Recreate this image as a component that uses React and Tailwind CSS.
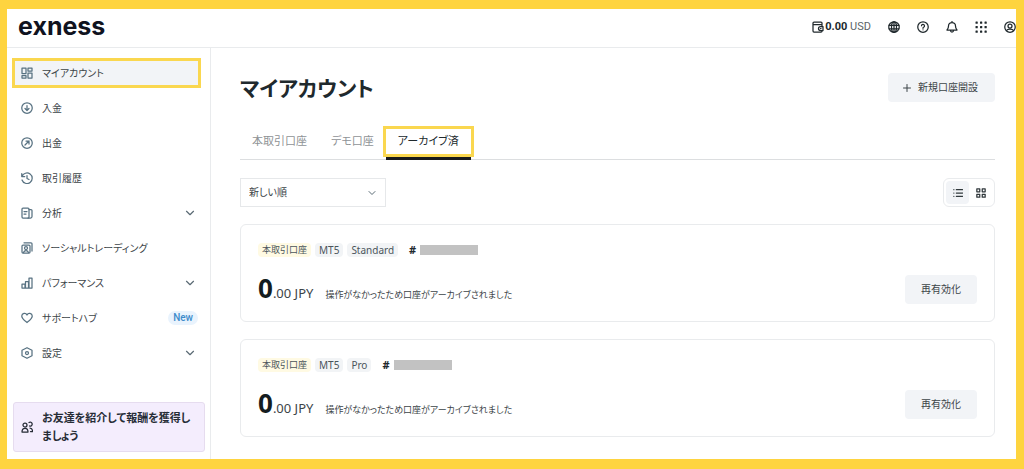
import clsx from 'clsx'
import { ChevronDown, Plus } from 'lucide-react'

function Icon({ size = 'size-3', width = 2.5, children }) {
  return (
    <svg
      viewBox="0 0 24 24"
      className={clsx(size, 'shrink-0')}
      fill="none"
      stroke="currentColor"
      strokeWidth={width}
      strokeLinecap="round"
      strokeLinejoin="round"
      aria-hidden="true"
    >
      {children}
    </svg>
  )
}

const icons = {
  accounts: (
    <Icon>
      <rect x="2" y="2" width="8" height="11" />
      <rect x="14" y="2" width="8" height="6" />
      <rect x="2" y="17" width="8" height="5" />
      <rect x="14" y="12" width="8" height="10" />
    </Icon>
  ),
  deposit: (
    <Icon>
      <circle cx="12" cy="12" r="10.500" />
      <path d="M12 7v10M8 13l4 4 4-4" />
    </Icon>
  ),
  withdraw: (
    <Icon>
      <circle cx="12" cy="12" r="10.500" />
      <path d="M8 16l8-8M10 8h6v6" />
    </Icon>
  ),
  history: (
    <Icon>
      <path d="M1.500 3v6h6M2 9a10.500 10.500 0 1 1 0 7M12 7v6l4 2" />
    </Icon>
  ),
  analytics: (
    <Icon>
      <rect x="2" y="2" width="14" height="20" rx="2" />
      <path d="M16 5h4a2 2 0 0 1 2 2v12a3 3 0 0 1-3 3h-5M6 9h6M6 14h4" />
    </Icon>
  ),
  social: (
    <Icon>
      <path d="M6 1.500h14a2 2 0 0 1 2 2V18" />
      <rect x="2" y="6" width="16" height="16" rx="2" />
      <circle cx="10" cy="12" r="3" />
      <path d="M5 21c1-3 3-4 5-4s4 1 5 4" />
    </Icon>
  ),
  performance: (
    <Icon>
      <path d="M2 14h6v8H2zM9 9h6v13H9zM16 2h6v20h-6z" />
    </Icon>
  ),
  support: (
    <Icon>
      <path d="M12 21C7 17 1.500 13 1.500 8A5.500 5.500 0 0 1 12 6a5.500 5.500 0 0 1 10.500 2c0 5-5.500 9-10.500 13z" />
    </Icon>
  ),
  settings: (
    <Icon>
      <path d="M12 1.500l10 5v11l-10 5-10-5v-11z" />
      <circle cx="12" cy="12" r="3" />
    </Icon>
  ),
}

const navItems = [
  { label: 'マイアカウント', icon: 'accounts', active: true },
  { label: '入金', icon: 'deposit' },
  { label: '出金', icon: 'withdraw' },
  { label: '取引履歴', icon: 'history' },
  { label: '分析', icon: 'analytics', expandable: true },
  { label: 'ソーシャルトレーディング', icon: 'social' },
  { label: 'パフォーマンス', icon: 'performance', expandable: true },
  { label: 'サポートハブ', icon: 'support', badge: 'New' },
  { label: '設定', icon: 'settings', expandable: true },
]

const tabs = [
  { label: '本取引口座' },
  { label: 'デモ口座' },
  { label: 'アーカイブ済', active: true },
]

const accounts = [
  { id: 1, platform: 'MT5', type: 'Standard', whole: '0', rest: '.00 JPY' },
  { id: 2, platform: 'MT5', type: 'Pro', whole: '0', rest: '.00 JPY' },
]

function Header() {
  return (
    <header className="flex h-[39px] items-center justify-between overflow-hidden border-b border-[#e9ebed] pl-[11px] text-[#20292d]">
      <a href="#" className="pb-1 font-['Inter'] text-[25px] leading-[30px] font-bold text-[#10131f]">
        exness
      </a>
      <div className="flex items-center gap-[17px] pb-[3px]">
        <button className="flex items-center gap-px font-['Roboto'] text-[11px] leading-3">
          <Icon>
            <path d="M20 7V4a2 2 0 0 0-2-2H4a2 2 0 0 0-2 2v16a2 2 0 0 0 2 2h14a2 2 0 0 0 2-2M2 7h18v4" />
            <path d="M22 11h-5a4 4 0 0 0 0 8h5z" />
            <path d="M17 15h1" />
          </Icon>
          <span>
            <b>0.00</b> <span className="text-[#5c6468]">USD</span>
          </span>
        </button>
        <button aria-label="Language">
          <Icon>
            <circle cx="12" cy="12" r="10.500" />
            <ellipse cx="12" cy="12" rx="5" ry="10.500" />
            <path d="M2 8.500h20M2 15.500h20M12 2v20" />
          </Icon>
        </button>
        <button aria-label="Help">
          <Icon>
            <circle cx="12" cy="12" r="10.500" />
            <path d="M9 9.500a3 3 0 1 1 4 3c-1 .5-1 1-1 2M12 17.500v.1" />
          </Icon>
        </button>
        <button aria-label="Notifications">
          <Icon>
            <path d="M2 18h20c-2-2-3-4-3-8a7 7 0 0 0-14 0c0 4-1 6-3 8zM9 19c0 4 6 4 6 0M12 1v2" />
          </Icon>
        </button>
        <button aria-label="Apps">
          <svg viewBox="0 0 24 24" className="size-3" fill="currentColor" aria-hidden="true">
            {[1, 10, 19].map(y => [1, 10, 19].map(x => (
              <rect key={`${x}-${y}`} x={x} y={y} width="4.500" height="4.500" rx="1" />
            )))}
          </svg>
        </button>
        <button aria-label="Profile">
          <Icon>
            <circle cx="12" cy="12" r="10.500" />
            <circle cx="12" cy="10" r="4" />
            <path d="M5 19c2-4 12-4 14 0" />
          </Icon>
        </button>
      </div>
    </header>
  )
}

function Sidebar() {
  return (
    <aside className="flex w-[204px] shrink-0 flex-col border-r border-[#e9ebed] pt-[10px] pb-[7px]">
      <nav className="flex flex-col gap-[5px] pr-[9px] pl-[5px]">
        {navItems.map(item => (
          <a
            key={item.label}
            href="#"
            className={clsx(
              'flex h-[30px] items-center border-[3px] pl-[6px] text-[10px]',
              item.active ? 'border-[#fad74f] bg-[#f2f4f7]' : 'border-transparent'
            )}
          >
            <span className="text-[#587282]">{icons[item.icon]}</span>
            <span className="ml-[9px] flex-1">{item.label}</span>
            {item.badge && (
              <span className="rounded-full bg-[#e9f3fd] px-[5px] font-['Roboto'] text-[10px] leading-[14px] font-medium text-[#3d8bcb]">
                {item.badge}
              </span>
            )}
            {item.expandable && <ChevronDown size={14} strokeWidth={2} className="mr-px text-[#5b6b75]" />}
          </a>
        ))}
      </nav>
      <a
        href="#"
        className="mt-auto mr-[5px] ml-[6px] flex h-[50px] items-center rounded-[3px] border border-[#e6dcef] bg-[#f4edfd] pr-[10px] pl-[7px] text-[11px] leading-[18px] font-bold text-[#262c36]"
      >
        <Icon>
          <circle cx="8" cy="8" r="4" />
          <path d="M2 22c0-10 12-10 12 0zM16 3a4 4 0 1 1 1 7M18 14c3 0 5 3 5 7h-4" />
        </Icon>
        <span className="ml-[9px]">お友達を紹介して報酬を獲得しましょう</span>
      </a>
    </aside>
  )
}

function AccountCard({ account }) {
  return (
    <article className="flex items-end justify-between rounded-md border border-[#e9ebed] p-[17px] pt-[18px]">
      <div>
        <div className="flex items-center gap-1 text-[9px] leading-[14px] text-[#4b555b]">
          <span className="rounded-sm bg-[#fffae3] px-1">本取引口座</span>
          <span className="rounded-sm bg-[#f2f4f6] px-1 text-[10px]">{account.platform}</span>
          <span className="rounded-sm bg-[#f2f4f6] px-1 text-[10px]">{account.type}</span>
          <span className="ml-[7px] text-[11px] font-bold text-[#20292d]">#</span>
          <span className="h-[10px] w-[58px] bg-[#c2c2c2]" />
        </div>
        <div className="mt-[15px] flex items-baseline">
          <span className="text-[26px] leading-8 font-bold text-[#141c20]">{account.whole}</span>
          <span className="text-[13px] leading-4">{account.rest}</span>
          <span className="ml-3 text-[9px] leading-4">操作がなかったため口座がアーカイブされました</span>
        </div>
      </div>
      <button className="h-[29px] w-[72px] rounded-sm bg-[#f2f4f7] text-[10px]">再有効化</button>
    </article>
  )
}

export default function App() {
  return (
    <div className="flex min-h-screen flex-col border-t-[9px] border-r-8 border-b-[10px] border-l-[7px] border-[#fed43f] bg-white font-['Noto_Sans','Noto_Sans_CJK_JP',sans-serif] text-[#3c4448] [font-feature-settings:'palt']">
      <Header />
      <div className="flex flex-1">
        <Sidebar />
        <main className="min-w-0 flex-1 pt-[25px] pr-[21px] pb-[22px] pl-[29px]">
          <div className="flex h-[29px] items-center justify-between">
            <h1 className="text-[21px] leading-7 font-bold text-[#20292d]">マイアカウント</h1>
            <button className="flex h-[29px] w-[107px] items-center justify-center gap-[5px] rounded-sm bg-[#f2f4f7] pr-1 text-[10px]">
              <Plus size={12} />
              新規口座開設
            </button>
          </div>

          <div role="tablist" className="mt-6 flex border-b border-[#dcdee0] text-[11px] leading-[30px]">
            {tabs.map(tab => (
              <button
                key={tab.label}
                role="tab"
                aria-selected={!!tab.active}
                className={clsx(
                  'relative -mb-px border-b-4 px-3',
                  tab.active ? 'border-[#17191b] text-[#20292d]' : 'border-transparent text-[#8f9396]'
                )}
              >
                {tab.label}
                {tab.active && (
                  <span className="absolute inset-x-[-3px] top-0 h-[31px] border-[3px] border-[#fad74f]" />
                )}
              </button>
            ))}
          </div>

          <div className="mt-[18px] flex items-center justify-between">
            <div className="relative">
              <select
                aria-label="並べ替え"
                className="h-[29px] w-[146px] appearance-none border border-[#e6e8ea] bg-white pl-2 text-[10px]"
              >
                <option>新しい順</option>
              </select>
              <ChevronDown size={12} className="pointer-events-none absolute top-[9px] right-2 text-[#5b6b75]" />
            </div>
            <div className="flex h-[29px] items-center rounded-md border border-[#e9ebed] p-[2px] text-[#30383c]">
              <button aria-label="リスト表示" className="flex size-[23px] items-center justify-center rounded-sm bg-[#f2f4f7]">
                <Icon size="size-[10px]" width={3}>
                  <path d="M8 4h15M8 12h15M8 20h15M2 4h.1M2 12h.1M2 20h.1" />
                </Icon>
              </button>
              <button aria-label="グリッド表示" className="flex size-[23px] items-center justify-center">
                <Icon size="size-[10px]" width={3}>
                  <path d="M2 2h7v7H2zM15 2h7v7h-7zM2 15h7v7H2zM15 15h7v7h-7z" />
                </Icon>
              </button>
            </div>
          </div>

          <div className="mt-[17px] flex flex-col gap-[17px]">
            {accounts.map(account => (
              <AccountCard key={account.id} account={account} />
            ))}
          </div>
        </main>
      </div>
    </div>
  )
}
